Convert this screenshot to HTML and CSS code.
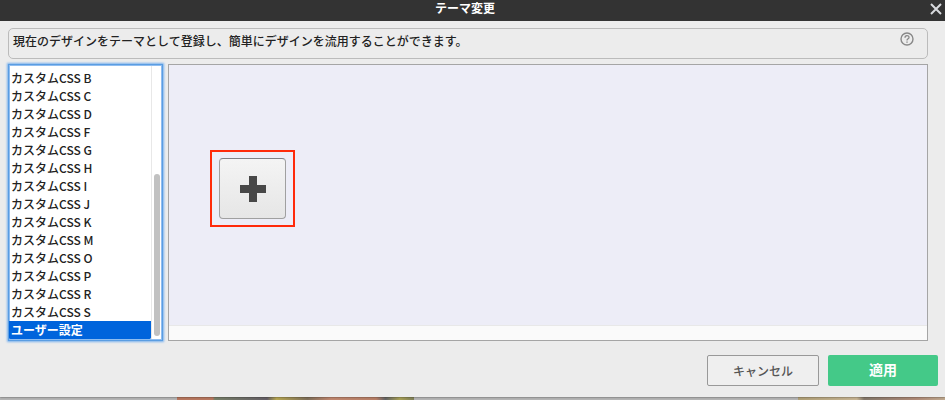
FILE: index.html
```html
<!DOCTYPE html>
<html lang="ja">
<head>
    <meta charset="UTF-8">
    <meta name="viewport" content="width=device-width, initial-scale=1.0">
    <title>テーマ変更</title>
    <link rel="stylesheet" href="styles.css">
</head>
<body>
    <div class="dialog" role="dialog" aria-labelledby="dialog-title">
        <header class="titlebar">
            <h1 id="dialog-title">テーマ変更</h1>
            <button type="button" class="close" aria-label="閉じる">
                <svg width="12" height="12" viewBox="0 0 12 12"><path d="M1 1L11 11M11 1L1 11" stroke="#d8dade" stroke-width="2" fill="none"/></svg>
            </button>
        </header>
        <div class="content">
            <div class="description">
                <p>現在のデザインをテーマとして登録し、簡単にデザインを流用することができます。</p>
                <button type="button" class="help" aria-label="ヘルプ">
                    <svg width="14" height="14" viewBox="0 0 14 14" fill="none" stroke="#888">
                        <circle cx="7" cy="7" r="6" stroke-width="1.4"/>
                        <path d="M5 5.7C5 3 9 3 9 5.4C9 6.8 7 6.8 7 8.5" stroke-width="1.3"/>
                        <path d="M7 9.4V10.8" stroke-width="1.4"/>
                    </svg>
                </button>
            </div>
            <div class="panels">
                <div class="theme-list">
                    <select size="15" aria-label="テーマ">
                        <option>カスタムCSS B</option>
                        <option>カスタムCSS C</option>
                        <option>カスタムCSS D</option>
                        <option>カスタムCSS F</option>
                        <option>カスタムCSS G</option>
                        <option>カスタムCSS H</option>
                        <option>カスタムCSS I</option>
                        <option>カスタムCSS J</option>
                        <option>カスタムCSS K</option>
                        <option>カスタムCSS M</option>
                        <option>カスタムCSS O</option>
                        <option>カスタムCSS P</option>
                        <option>カスタムCSS R</option>
                        <option>カスタムCSS S</option>
                        <option selected>ユーザー設定</option>
                    </select>
                    <div class="scrollbar"><div class="thumb"></div></div>
                </div>
                <div class="preview">
                    <div class="themes">
                        <div class="highlight">
                            <button type="button" class="add" aria-label="テーマを追加">
                                <svg width="26" height="26" viewBox="0 0 26 26"><path d="M9 0H17V9H26V17H17V26H9V17H0V9H9Z" fill="#484848"/></svg>
                            </button>
                        </div>
                    </div>
                    <div class="track"></div>
                </div>
            </div>
        </div>
        <footer class="actions">
            <button type="button" class="cancel">キャンセル</button>
            <button type="submit" class="apply">適用</button>
        </footer>
    </div>
    <!-- page behind the dialog -->
    <div class="backdrop">
        <div class="photo"></div>
        <div class="photo photo-right"></div>
    </div>
</body>
</html>
```

FILE: styles.css
```css
* {
    box-sizing: border-box;
}
body {
    margin: 0;
    min-height: 100vh;
    overflow: hidden;
    display: flex;
    flex-direction: column;
    background: #b5b5b5;
    color: #222;
    font-family: "Noto Sans CJK JP", sans-serif;
    font-size: 12px;
    font-weight: 500;
    line-height: 18px;
}
button {
    font-family: inherit;
    font-weight: inherit;
    padding: 0;
    cursor: pointer;
}
svg {
    display: block;
}
.dialog {
    position: relative;
    background: #ececec;
    box-shadow: 0 0 2px rgba(0, 0, 0, 0.6);
}
.titlebar {
    display: grid;
    grid-template-columns: 1fr auto 1fr;
    height: 21px;
    padding-right: 3px;
    background: #333;
}
.titlebar h1 {
    grid-column: 2;
    margin: 0 12px 0 0;
    color: #fff;
    font-size: 12px;
    line-height: 16px;
}
.close {
    justify-self: end;
    align-self: start;
    margin-top: 3px;
    border: none;
    background: none;
}
.content {
    padding: 7px 17px 0 8px;
}
.description {
    display: flex;
    justify-content: space-between;
    align-items: flex-start;
    height: 31px;
    padding: 3px 13px 0 4px;
    border: 1px solid #bbb;
    border-radius: 5px;
}
.description p {
    margin: 0;
}
.help {
    border: none;
    background: none;
}
.panels {
    display: flex;
    gap: 5px;
    margin-top: 5px;
}
.theme-list {
    display: flex;
    width: 155px;
    height: 277px;
    padding: 1px 0;
    border: 1px solid #5a9de2;
    background: #fff;
    box-shadow: 0 0 2px 1px #7ab2ee, inset 0 0 0 1px #8fbdf0;
}
.theme-list select {
    flex: 1;
    min-width: 0;
    padding: 3px 0 0;
    border: none;
    outline: none;
    background: transparent;
    color: #222;
    font: inherit;
    overflow: hidden;
}
.theme-list option {
    height: 18px;
    min-height: 18px;
    padding: 0 2px;
    font-weight: 500;
    line-height: 16px;
}
.theme-list option:checked {
    background: #0064dc linear-gradient(#0064dc, #0064dc);
    color: #fff;
    -webkit-text-fill-color: #fff;
    font-weight: bold;
}
.scrollbar {
    display: flex;
    flex-direction: column;
    justify-content: flex-end;
    width: 11px;
    padding: 0 2px 3px;
    border-left: 1px solid #e8e8e8;
}
.thumb {
    height: 60%;
    border-radius: 3px;
    background: #c1c1c1;
}
.preview {
    flex: 1;
    display: flex;
    flex-direction: column;
    border: 1px solid #a5a5a5;
    background: #ededf7;
}
.themes {
    flex: 1;
    padding: 85px 41px 0;
}
.highlight {
    width: fit-content;
    padding: 6px 7px;
    border: 2px solid #ff2a0a;
}
.add {
    display: grid;
    place-items: center;
    width: 67px;
    height: 61px;
    border: 1px solid #a0a0a0;
    border-top-color: #808085;
    border-radius: 4px;
    background: linear-gradient(#f4f4f4, #e6e6e6);
}
.track {
    height: 15px;
    border-top: 1px solid #e8e8e8;
    background: #fafafa;
}
.actions {
    display: flex;
    justify-content: flex-end;
    gap: 9px;
    padding: 14px 7px 11px;
}
.actions button {
    height: 31px;
    border-radius: 2px;
}
.cancel {
    width: 112px;
    border: 1px solid #999;
    background: #efefef;
    color: #555;
    font-size: 12px;
}
.apply {
    width: 110px;
    padding-bottom: 4px;
    border: none;
    background: #44c988;
    color: #fff;
    font-size: 14px;
    font-weight: bold;
}
.backdrop {
    flex: 1;
    display: flex;
    justify-content: space-between;
    padding-left: 177px;
}
.photo {
    width: 237px;
    background: linear-gradient(to right, #b87860 15%, #78806a 16%, #666066 38%, #b8a854 42%, #80705a 55%, #c28870 65%, #b88068 84%, #666 88%, #aaa258 94%, #80805a);
}
.photo-right {
    width: 147px;
    background: linear-gradient(to right, #b0a078, #c8b595 40%, #85796c 45%, #b08a78 80%, #c0aa90);
}
```
